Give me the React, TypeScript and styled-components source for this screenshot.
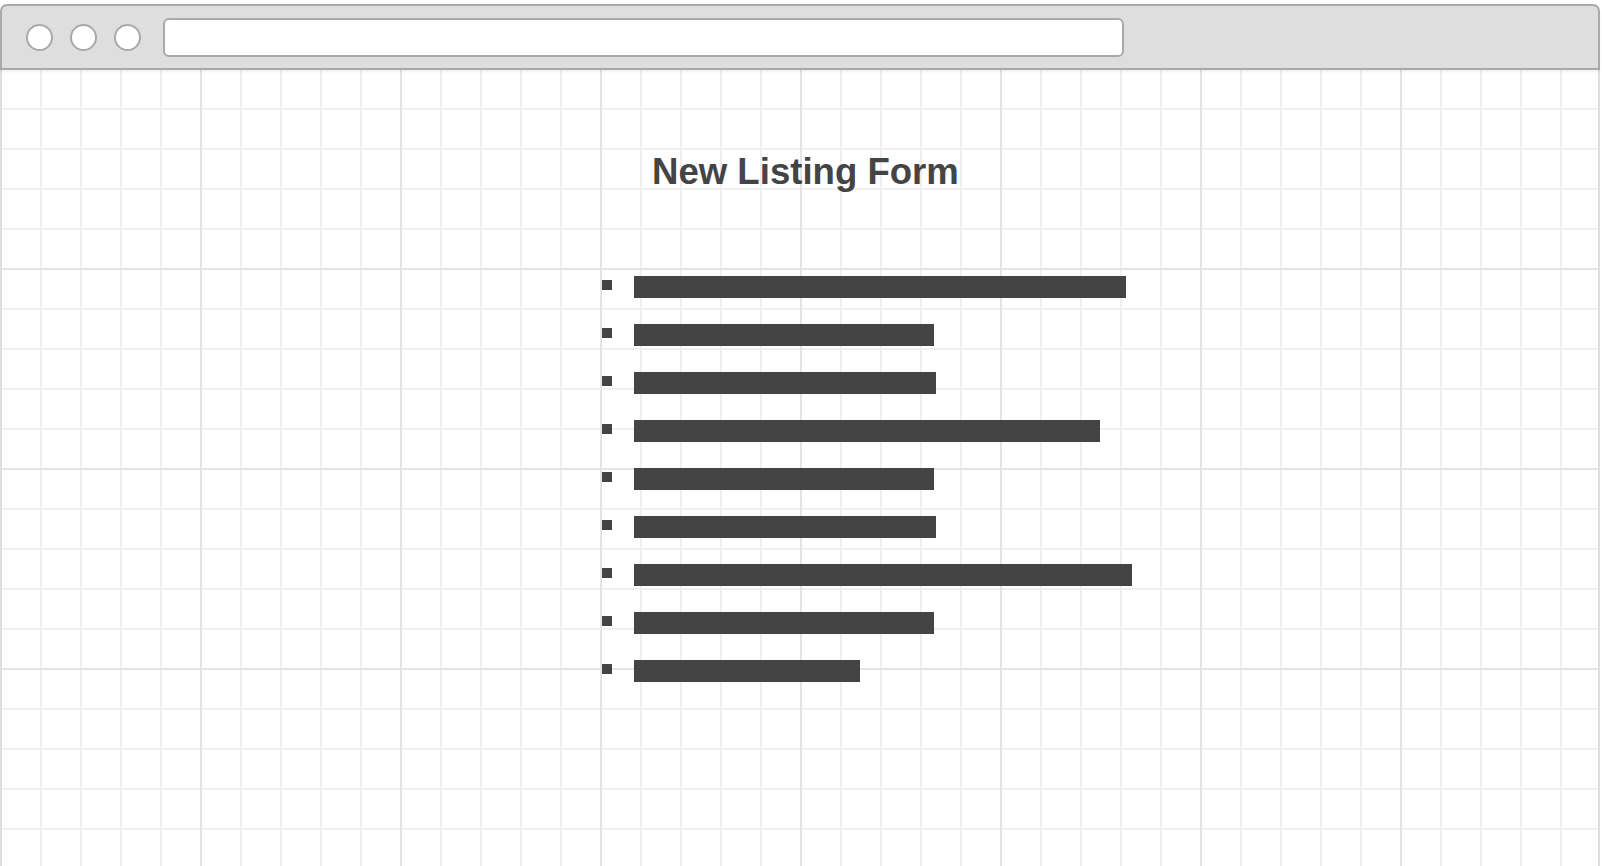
import React from "react";
import styled, { createGlobalStyle } from "styled-components";

const GlobalStyle = createGlobalStyle`
  html, body {
    margin: 0;
    padding: 0;
    background: #ffffff;
    overflow: hidden;
  }
  body {
    font-family: "Liberation Sans", Arial, sans-serif;
  }
  * {
    box-sizing: border-box;
  }
`;

const Window = styled.div`
  display: flex;
  flex-direction: column;
  width: 1600px;
  height: calc(100vh - 4px);
  margin-top: 4px;
`;

const TitleBar = styled.div`
  position: relative;
  z-index: 1;
  display: flex;
  align-items: center;
  height: 66px;
  padding: 1px 0 0 24px;
  background: #dedede;
  border: 2px solid #a9a9a9;
  border-radius: 7px 7px 0 0;
  box-shadow: 0 2px 3px rgba(0, 0, 0, 0.06);
`;

const Dots = styled.div`
  display: flex;
  gap: 17px;
`;

const Dot = styled.span`
  display: block;
  width: 27px;
  height: 27px;
  border-radius: 50%;
  background: #ffffff;
  border: 2px solid #a9a9a9;
`;

const AddressBar = styled.div`
  width: 961px;
  height: 39px;
  margin-left: 22px;
  background: #ffffff;
  border: 2px solid #a9a9a9;
  border-radius: 6px;
`;

const Canvas = styled.div`
  flex: 1;
  display: flex;
  flex-direction: column;
  border-left: 2px solid #dedede;
  border-right: 2px solid #dedede;
  background-color: #ffffff;
  background-image:
    linear-gradient(to right, #e4e4e4 2px, transparent 2px),
    linear-gradient(to bottom, #e4e4e4 2px, transparent 2px),
    linear-gradient(to right, #efefef 2px, transparent 2px),
    linear-gradient(to bottom, #efefef 2px, transparent 2px);
  background-size: 200px 200px, 200px 200px, 40px 40px, 40px 40px;
  background-position: 198px 198px, 198px 198px, 38px 38px, 38px 38px;
`;

const FormColumn = styled.div`
  display: flex;
  flex-direction: column;
  align-items: flex-start;
  margin-left: 600px;
`;

const Title = styled.h1`
  margin: 81px 0 0 50px;
  font-family: "Liberation Sans", Arial, sans-serif;
  font-size: 36.6px;
  line-height: 42px;
  font-weight: 700;
  color: #444444;
`;

const FieldList = styled.ul`
  display: flex;
  flex-direction: column;
  gap: 26px;
  margin: 83px 0 0 0;
  padding: 0;
  list-style: none;
`;

const FieldRow = styled.li`
  display: flex;
  align-items: flex-start;
  gap: 22px;
`;

const Bullet = styled.span`
  display: block;
  width: 10px;
  height: 10px;
  margin-top: 4px;
  background: #444444;
`;

const Bar = styled.span<{ $width: number }>`
  display: block;
  width: ${(p) => p.$width}px;
  height: 22px;
  background: #444444;
`;

const fieldWidths = [492, 300, 302, 466, 300, 302, 498, 300, 226];

export default function App() {
  return (
    <>
      <GlobalStyle />
      <Window>
        <TitleBar>
          <Dots>
            <Dot />
            <Dot />
            <Dot />
          </Dots>
          <AddressBar />
        </TitleBar>
        <Canvas>
          <FormColumn>
            <Title>New Listing Form</Title>
            <FieldList>
              {fieldWidths.map((w, i) => (
                <FieldRow key={i}>
                  <Bullet />
                  <Bar $width={w} />
                </FieldRow>
              ))}
            </FieldList>
          </FormColumn>
        </Canvas>
      </Window>
    </>
  );
}
